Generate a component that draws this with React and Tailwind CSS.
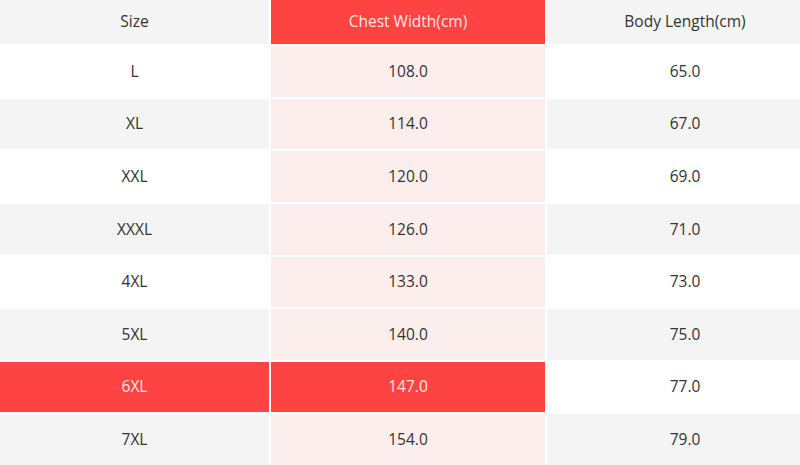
import React from 'react';

const rows = [
  ['L', '108.0', '65.0'],
  ['XL', '114.0', '67.0'],
  ['XXL', '120.0', '69.0'],
  ['XXXL', '126.0', '71.0'],
  ['4XL', '133.0', '73.0'],
  ['5XL', '140.0', '75.0'],
  ['6XL', '147.0', '77.0'],
  ['7XL', '154.0', '79.0'],
];

const App = () => {
  return (
    <div className="w-[800px] h-[465px] overflow-hidden bg-white">
      {/* table is a bit wider than the frame, last column gets cut off */}
      <div
        className="w-[823px] h-[465px] bg-white grid grid-cols-[269px_274px_276px] grid-rows-[44px_repeat(8,1fr)] gap-[2px] text-[15.5px] text-[#333]"
        style={{ fontFamily: '"Open Sans", sans-serif' }}
      >
        {/* Header */}
        <div className="bg-[#f4f4f4] flex items-center justify-center">Size</div>
        <div className="bg-[#fe4343] text-[#fde6e0] flex items-center justify-center">Chest Width(cm)</div>
        <div className="bg-[#f4f4f4] flex items-center justify-center">Body Length(cm)</div>

        {rows.map(([size, chest, body], i) => {
          const hot = size === '6XL';
          const rowBg = i % 2 === 0 ? 'bg-white' : 'bg-[#f4f4f4]';
          return (
            <React.Fragment key={size}>
              <div className={`${hot ? 'bg-[#fe4343] text-[#fde6e0]' : rowBg} flex items-center justify-center`}>
                {size}
              </div>
              <div className={`${hot ? 'bg-[#fe4343] text-[#fde6e0]' : 'bg-[#fdeeee]'} flex items-center justify-center`}>
                {chest}
              </div>
              <div className={`${hot ? 'bg-white' : rowBg} flex items-center justify-center`}>
                {body}
              </div>
            </React.Fragment>
          );
        })}
      </div>
    </div>
  );
};

export default App;
